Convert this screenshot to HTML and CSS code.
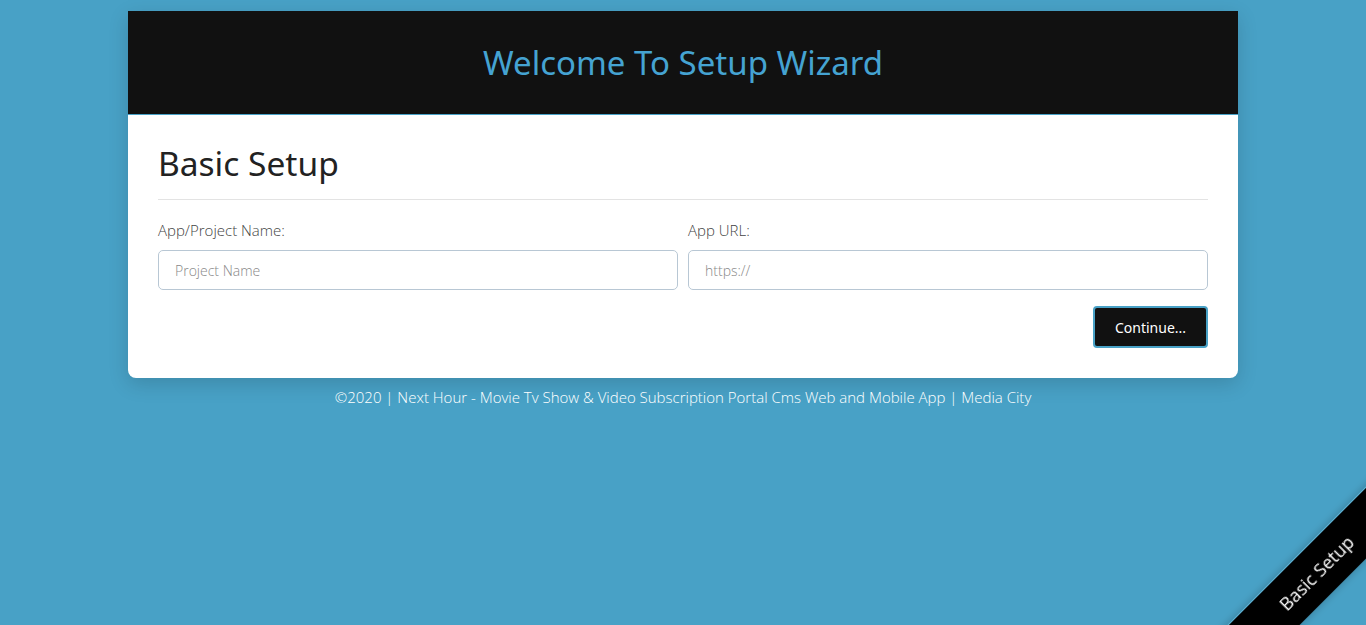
FILE: index.html
```html
<!DOCTYPE html>
<html lang="en">
<head>
<meta charset="utf-8">
<title>Setup Wizard</title>
<link rel="stylesheet" href="styles.css">
</head>
<body>
<div class="container">
  <div class="card">
    <div class="card-header">
      <h1 class="wizard-title">Welcome To Setup Wizard</h1>
    </div>
    <div class="card-body">
      <h2 class="section-title">Basic Setup</h2>
      <hr class="divider">
      <form class="form">
        <div class="form-row">
          <div class="form-group">
            <label class="form-label">App/Project Name:</label>
            <input class="form-input" type="text" placeholder="Project Name">
          </div>
          <div class="form-group">
            <label class="form-label">App URL:</label>
            <input class="form-input" type="text" placeholder="https://">
          </div>
        </div>
        <div class="form-actions">
          <button class="btn-continue" type="button">Continue...</button>
        </div>
      </form>
    </div>
  </div>
  <p class="footer">©2020 | Next Hour - Movie Tv Show &amp; Video Subscription Portal Cms Web and Mobile App | Media City</p>
</div>
<div class="ribbon"><span>Basic Setup</span></div>
</body>
</html>
```
FILE: styles.css
```css
html, body {
  margin: 0;
  padding: 0;
}
body {
  background: #48a1c6;
  font-family: "Open Sans", "Liberation Sans", sans-serif;
  height: 625px;
  overflow: hidden;
}
.container {
  width: 1110px;
  margin: 0 auto;
  padding-top: 11px;
}
.card {
  background: #fff;
  border-radius: 0 0 8px 8px;
  box-shadow: 0 6px 20px rgba(0, 0, 0, 0.15);
  overflow: hidden;
}
.card-header {
  background: #111;
  border-bottom: 1px solid #48a1c6;
  height: 103px;
  display: flex;
  align-items: center;
  justify-content: center;
}
.wizard-title {
  margin: 0;
  font-family: "Noto Sans", "Open Sans", sans-serif;
  font-weight: 400;
  font-size: 33px;
  color: #45a3d2;
}
.card-body {
  padding: 26px 30px 30px;
}
.section-title {
  margin: 0;
  font-family: "Noto Sans", "Open Sans", sans-serif;
  font-weight: 400;
  font-size: 33.5px;
  line-height: 44px;
  color: #222;
}
.divider {
  border: 0;
  border-top: 1px solid #e3e3e3;
  margin: 14px 0 20px;
}
.form-row {
  display: flex;
  gap: 10px;
}
.form-group {
  flex: 1;
  display: flex;
  flex-direction: column;
}
.form-label {
  font-size: 15px;
  font-weight: 300;
  color: #444;
  line-height: 20px;
  margin-bottom: 10px;
}
.form-input {
  box-sizing: border-box;
  height: 40px;
  border: 1px solid #b8c7d4;
  border-radius: 5px;
  padding: 0 16px;
  font-family: "Open Sans", sans-serif;
  font-weight: 300;
  font-size: 14px;
  color: #333;
}
.form-input::placeholder {
  color: #888;
}
.form-actions {
  display: flex;
  justify-content: flex-end;
  margin-top: 16px;
}
.btn-continue {
  box-sizing: border-box;
  width: 115px;
  height: 42px;
  background: #111;
  color: #fff;
  border: 2px solid #48a1c6;
  border-radius: 4px;
  font-family: "Noto Sans", "Open Sans", sans-serif;
  font-size: 14px;
  cursor: pointer;
}
.footer {
  margin: 9px 0 0;
  text-align: center;
  color: #fff;
  font-size: 15px;
  font-weight: 300;
}
.ribbon {
  position: fixed;
  right: -100px;
  bottom: 27px;
  width: 300px;
  height: 51px;
  background: #000;
  border-top: 1px solid #5fb3d6;
  box-sizing: border-box;
  transform: rotate(-45deg);
  display: flex;
  align-items: center;
  justify-content: center;
  box-shadow: 0 0 8px rgba(0,0,0,0.25);
}
.ribbon span {
  color: #fff;
  font-size: 18px;
  font-weight: 400;
}
```
